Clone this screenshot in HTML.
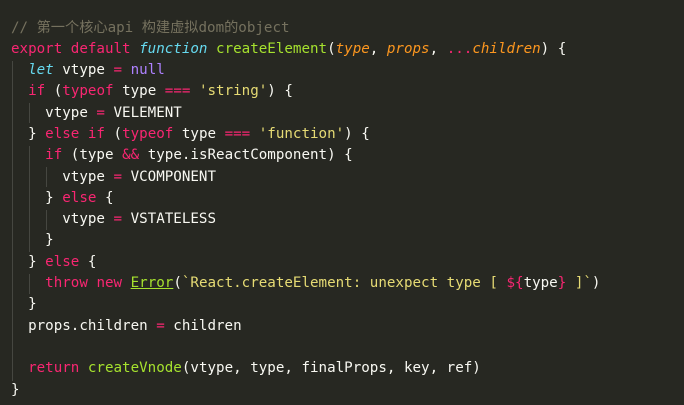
<!DOCTYPE html><html><head><meta charset="utf-8"><style>
body{margin:0;width:684px;height:405px;background:#272822;overflow:hidden;position:relative}
pre{margin:0;position:absolute;left:11px;top:17.5px;font-family:"DejaVu Sans Mono","Liberation Mono","Noto Sans CJK SC",monospace;font-size:14.2px;line-height:21.3px;color:#f8f8f2}
.c{color:#75715e}.k{color:#f92672}.i{color:#66d9ef;font-style:italic}.f{color:#a6e22e}.p{color:#fd971f;font-style:italic}.s{color:#e6db74}.n{color:#ae81ff}
.u{text-decoration:underline;text-decoration-color:#a6e22e}
.g{position:absolute;width:1px;background:#464741}
</style></head><body>
<div class="g" style="left:12px;top:61px;height:320px"></div>
<div class="g" style="left:29px;top:103px;height:20px"></div>
<div class="g" style="left:29px;top:146px;height:106px"></div>
<div class="g" style="left:46px;top:167px;height:20px"></div>
<div class="g" style="left:46px;top:210px;height:20px"></div>
<div class="g" style="left:29px;top:274px;height:20px"></div>
<pre><span class="c">// 第一个核心api 构建虚拟dom的object</span>
<span class="k">export</span> <span class="k">default</span> <span class="i">function</span> <span class="f">createElement</span>(<span class="p">type</span>, <span class="p">props</span>, <span class="k">...</span><span class="p">children</span>) {
  <span class="i">let</span> vtype <span class="k">=</span> <span class="n">null</span>
  <span class="k">if</span> (<span class="k">typeof</span> type <span class="k">===</span> <span class="s">'string'</span>) {
    vtype <span class="k">=</span> VELEMENT
  } <span class="k">else</span> <span class="k">if</span> (<span class="k">typeof</span> type <span class="k">===</span> <span class="s">'function'</span>) {
    <span class="k">if</span> (type <span class="k">&amp;&amp;</span> type.isReactComponent) {
      vtype <span class="k">=</span> VCOMPONENT
    } <span class="k">else</span> {
      vtype <span class="k">=</span> VSTATELESS
    }
  } <span class="k">else</span> {
    <span class="k">throw</span> <span class="k">new</span> <span class="f u">Error</span>(<span class="s">`React.createElement: unexpect type [ </span><span class="k">${</span>type<span class="k">}</span><span class="s"> ]`</span>)
  }
  props.children <span class="k">=</span> children

  <span class="k">return</span> <span class="f">createVnode</span>(vtype, type, finalProps, key, ref)
}</pre>
</body></html>
